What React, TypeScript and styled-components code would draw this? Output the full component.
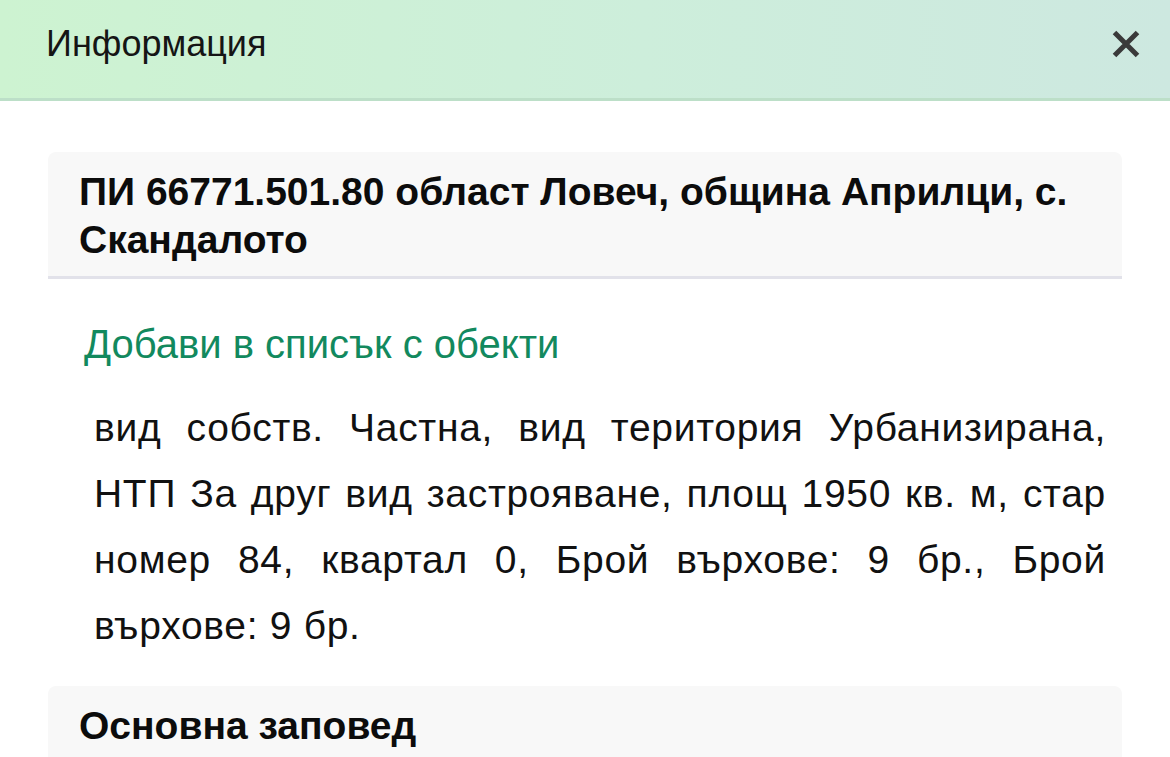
import React from "react";
import styled, { createGlobalStyle } from "styled-components";

const GlobalStyle = createGlobalStyle`
  html, body {
    margin: 0;
    padding: 0;
    background: #ffffff;
    font-family: "Liberation Sans", Arial, sans-serif;
    color: #111111;
  }
`;

const Page = styled.div`
  width: 1170px;
  min-height: 757px;
  background: #ffffff;
  overflow: hidden;
`;

const Header = styled.header`
  height: 101px;
  box-sizing: border-box;
  display: flex;
  align-items: center;
  justify-content: space-between;
  padding: 0 26px 10px 46px;
  background: linear-gradient(90deg, #cdf3d1 0%, #cdeedb 55%, #cde8e0 100%);
  border-bottom: 3px solid #bcdfc8;
`;

const HeaderTitle = styled.h1`
  margin: 0;
  font-size: 36px;
  line-height: 44px;
  font-weight: 400;
  color: #151515;
`;

const CloseButton = styled.button`
  width: 36px;
  height: 36px;
  padding: 0;
  border: none;
  background: transparent;
  display: flex;
  align-items: center;
  justify-content: center;
  cursor: pointer;
`;

const Content = styled.main`
  padding: 51px 48px 0;
`;

const SectionHead = styled.div<{ $underline?: boolean }>`
  background: #f8f8f8;
  border-radius: 8px 8px 0 0;
  padding: 16px 31px 12px;
  border-bottom: ${(p) => (p.$underline ? "3px solid #e2e2ea" : "none")};
`;

const SectionTitle = styled.h2`
  margin: 0;
  font-size: 39px;
  line-height: 48px;
  font-weight: 700;
  color: #0c0c0c;
`;

const AddLink = styled.a`
  display: block;
  margin: 41px 0 0 36px;
  font-size: 40px;
  line-height: 48px;
  color: #12895e;
  text-decoration: none;
  cursor: pointer;
`;

const Details = styled.p`
  margin: 27px 16px 27px 46px;
  font-size: 39px;
  letter-spacing: 0.7px;
  line-height: 66px;
  text-align: justify;
  color: #111111;
`;

export default function App() {
  return (
    <Page>
      <GlobalStyle />
      <Header>
        <HeaderTitle>Информация</HeaderTitle>
        <CloseButton aria-label="Затвори">
          <svg width="30" height="30" viewBox="0 0 30 30">
            <path
              d="M3.5 3.5 L26.5 26.5 M26.5 3.5 L3.5 26.5"
              stroke="#3a3a3a"
              strokeWidth="5"
              strokeLinecap="butt"
            />
          </svg>
        </CloseButton>
      </Header>
      <Content>
        <SectionHead $underline>
          <SectionTitle>
            ПИ 66771.501.80 област Ловеч, община Априлци, с. Скандалото
          </SectionTitle>
        </SectionHead>
        <AddLink>Добави в списък с обекти</AddLink>
        <Details>
          вид собств. Частна, вид територия Урбанизирана, НТП За друг вид
          застрояване, площ 1950 кв. м, стар номер 84, квартал 0, Брой
          върхове: 9 бр., Брой върхове: 9 бр.
        </Details>
        <SectionHead>
          <SectionTitle>Основна заповед</SectionTitle>
        </SectionHead>
      </Content>
    </Page>
  );
}
